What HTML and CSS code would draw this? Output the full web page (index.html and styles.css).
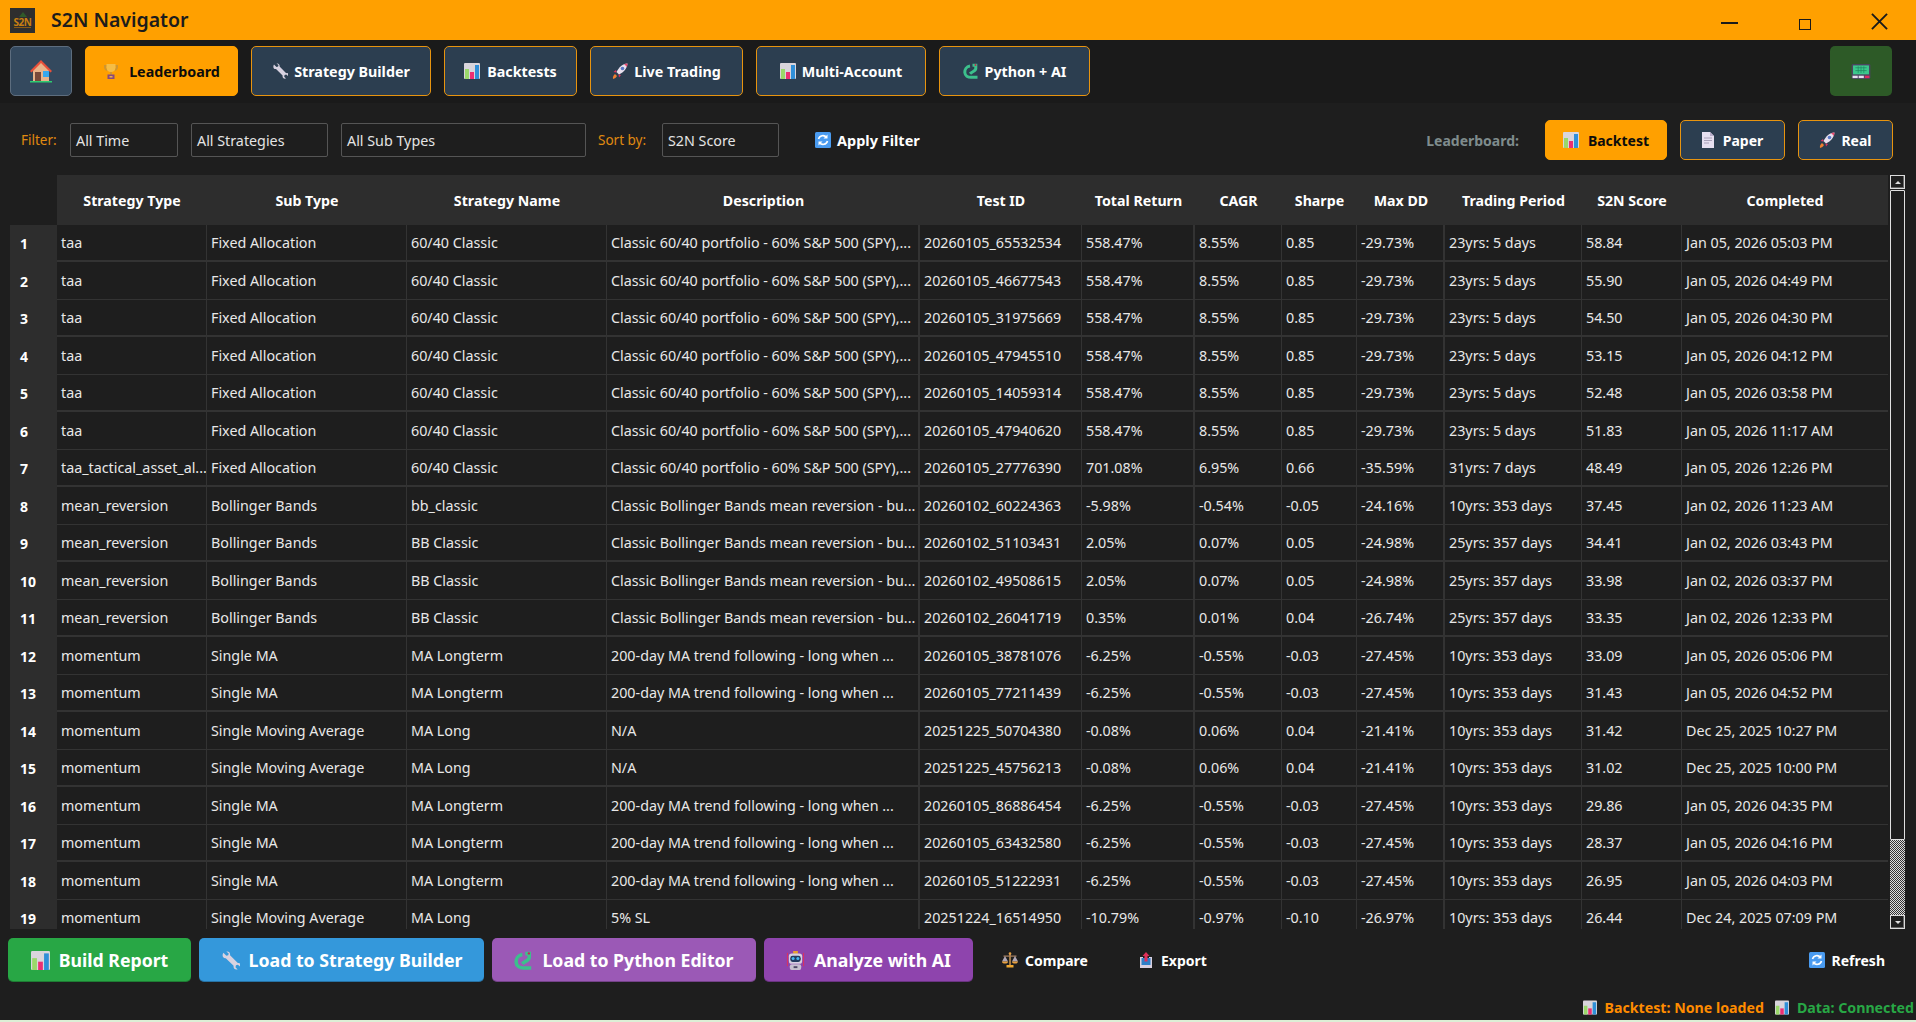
FILE: index.html
```html
<!DOCTYPE html>
<html lang="en">
<head>
<meta charset="utf-8">
<title>S2N Navigator</title>
<link rel="stylesheet" href="styles.css">
</head>
<body>
<svg class="defs" aria-hidden="true">
  <symbol id="chart" viewBox="0 0 16 16"><rect x="0" y="0" width="16" height="16" rx="1" fill="#d9d5dc"/><rect x="1" y="6" width="4" height="10" fill="#9ad86a"/><rect x="6" y="9" width="4" height="7" fill="#ec2f73"/><rect x="11" y="2" width="4" height="14" fill="#2f8fd8"/></symbol>
  <symbol id="wrench" viewBox="0 0 16 16"><path d="M2 1.5 4.5 4l1.6-.5L6.5 2 4.500.5C6.500 0 8 1.500 7.600 3.600l6.600 6.600c2-.5 2.600 1 2 3l-2-1.600-1.600.5-.4 1.600 1.800 1.800c-2.200.6-3.800-.8-3.400-3L4 6C1.800 6.500.500 4 2 1.500z" fill="#d8d2e0"/></symbol>
  <symbol id="trophy" viewBox="0 0 16 16"><path d="M1 2h14v2c0 2.500-2 4-3.500 4L13 3.500H3L4.500 8C3 8 1 6.500 1 4z" fill="#d0952e"/><path d="M3.500 1h9v3.500c0 3-2.200 4.500-4.500 4.500S3.500 7.500 3.500 4.500z" fill="#f5bd45"/><rect x="7" y="9" width="2" height="3" fill="#d0952e"/><rect x="4.500" y="11.500" width="7" height="4.500" fill="#8a4a7a"/><rect x="6.500" y="13" width="3" height="1.500" fill="#e8b050"/></symbol>
  <symbol id="house" viewBox="0 0 24 24"><path d="M4 11 12 3l8 8v11H4z" fill="#e8b48a"/><path d="M1 12 12 1l11 11-1.500 1.500L12 4 2.500 13.500z" fill="#e8503a"/><rect x="6" y="13" width="6" height="9" fill="#7a4a3a"/><rect x="14" y="12" width="6" height="6" fill="#35a8ee"/><rect x="1" y="22" width="22" height="1.500" fill="#2ecc71"/></symbol>
  <symbol id="rocket" viewBox="0 0 16 16"><path d="M1 16c-.5-2 .5-4 2-5l2 2c-1 1.500-2 2.500-4 3z" fill="#f08030"/><path d="M4 7 1.500 9l3 .5zM9 12l-2 2.500L6.500 11.500z" fill="#e03060"/><path d="M15.500.5C10.500 1 7 4 4.500 9L7 11.500c5-2.500 8-6 8.500-11z" fill="#e8e0ee"/><path d="M15.500.5 12 1l3 3z" fill="#e84a70"/><circle cx="10.500" cy="5.500" r="1.800" fill="#5a78c8"/></symbol>
  <symbol id="snake" viewBox="0 0 16 16"><path d="M7 3C3.500 3.500 1.600 6.500 1.800 9.500 2 12.800 5 14.300 8 14.300h6.500" fill="none" stroke="#3cc08c" stroke-width="3"/><path d="M9.500 2.200h3.300v3.300c0 2.700-3.800 3-5.800 5.200" fill="none" stroke="#3cc08c" stroke-width="3"/><circle cx="12.500" cy="2" r="1" fill="#c03050"/></symbol>
  <symbol id="pager" viewBox="0 0 20 16"><rect x="0" y="0" width="20" height="16" rx="1.500" fill="#4b4560"/><rect x="1.500" y="1.500" width="17" height="9.500" fill="#3cc88c"/><path d="M4 4h12M4 7h12M7 2.500v7M10 2.500v7M13 2.500v7" stroke="#1f8a60" stroke-width=".8"/><rect x="1" y="12.500" width="5.500" height="2.500" fill="#e8e0f0"/><rect x="7.500" y="12.500" width="5.500" height="2.500" fill="#e8e0f0"/><rect x="14" y="12.500" width="5" height="2.500" fill="#e02a60"/></symbol>
  <symbol id="page" viewBox="0 0 12 16"><path d="M0 0h8l4 4v12H0z" fill="#e6dff0"/><path d="M8 0l4 4H8z" fill="#b8aecb"/><path d="M2 6h8M2 8.500h8M2 11h5" stroke="#a8a0b8"/></symbol>
  <symbol id="refresh" viewBox="0 0 16 16"><rect width="16" height="16" rx="1.500" fill="#4a9bf0"/><path d="M3.500 7a4.500 4.500 0 0 1 8-1.500M12.500 9a4.500 4.500 0 0 1-8 1.500" fill="none" stroke="#fff" stroke-width="1.600"/><path d="M12.500 2.500v4h-4zM3.500 13.500v-4h4z" fill="#fff"/></symbol>
  <symbol id="scales" viewBox="0 0 16 16"><rect x="7.200" y="1" width="1.600" height="12" fill="#c09050"/><rect x="1.500" y="3.500" width="13" height="1.200" fill="#a88060"/><path d="M0 9.500h6L3 4zM10 9.500h6L13 4z" fill="#b0a8b8"/><path d="M0 9.500h6a3 2 0 0 1-6 0zM10 9.500h6a3 2 0 0 1-6 0z" fill="#e8a040"/><rect x="4.500" y="13" width="7" height="2.500" fill="#f0a830"/><circle cx="8" cy="1.500" r="1.300" fill="#e8a040"/></symbol>
  <symbol id="outbox" viewBox="0 0 14 16"><path d="M1 5h3v5h6V5h3v11H1z" fill="#d8d0e0"/><rect x="2.500" y="6" width="9" height="7" fill="#2f7fc8"/><path d="M7 0l3.500 4H8.500v5.500h-3V4H3.500z" fill="#e0305a"/></symbol>
  <symbol id="robot" viewBox="0 0 18 20"><rect x="0" y="2" width="1" height="14" fill="#e0305a"/><rect x="17" y="2" width="1" height="14" fill="#e0305a"/><rect x="6.500" y="0" width="5" height="3" fill="#e8a030"/><rect x="2" y="2.500" width="14" height="11" rx="3" fill="#d8d0e0"/><rect x="3.500" y="5" width="11" height="6.500" rx="2.500" fill="#243a60"/><circle cx="6.500" cy="8" r="1.600" fill="#45b8f0"/><circle cx="11.500" cy="8" r="1.600" fill="#45b8f0"/><rect x="3" y="14" width="12" height="6" rx="2" fill="#c8c0d0"/><rect x="7" y="16" width="4" height="2" fill="#504868"/></symbol>
</svg>

<header class="titlebar">
  <div class="app-logo"><span class="logo-tree"></span><span class="logo-text">S2N</span></div>
  <h1 class="app-title">S2N Navigator</h1>
  <div class="window-controls">
    <span class="wc-min"></span>
    <span class="wc-max"></span>
    <svg class="wc-close" viewBox="0 0 18 18"><path d="M1 1 17 17M17 1 1 17" stroke="#1a1a1a" stroke-width="2"/></svg>
  </div>
</header>

<nav class="navbar">
  <button class="nav-btn home-btn"><svg class="ic-home"><use href="#house"/></svg></button>
  <button class="nav-btn active w-leader"><svg class="ic"><use href="#trophy"/></svg>Leaderboard</button>
  <button class="nav-btn w-builder"><svg class="ic"><use href="#wrench"/></svg>Strategy Builder</button>
  <button class="nav-btn w-back"><svg class="ic"><use href="#chart"/></svg>Backtests</button>
  <button class="nav-btn w-live"><svg class="ic"><use href="#rocket"/></svg>Live Trading</button>
  <button class="nav-btn w-multi"><svg class="ic"><use href="#chart"/></svg>Multi-Account</button>
  <button class="nav-btn w-python"><svg class="ic"><use href="#snake"/></svg>Python + AI</button>
  <button class="calc-btn"><svg class="ic-pager"><use href="#pager"/></svg></button>
</nav>

<main class="content">
  <section class="filters">
    <span class="lbl lbl-filter">Filter:</span>
    <div class="combo w-time">All Time</div>
    <div class="combo w-strat">All Strategies</div>
    <div class="combo w-sub">All Sub Types</div>
    <span class="lbl lbl-sort">Sort by:</span>
    <div class="combo w-sort">S2N Score</div>
    <button class="flat-btn apply"><svg class="ic"><use href="#refresh"/></svg>Apply Filter</button>
    <span class="lb-label">Leaderboard:</span>
    <button class="nav-btn active lb-btn w-lb1"><svg class="ic"><use href="#chart"/></svg>Backtest</button>
    <button class="nav-btn lb-btn w-lb2"><svg class="ic-page"><use href="#page"/></svg>Paper</button>
    <button class="nav-btn lb-btn w-lb3"><svg class="ic"><use href="#rocket"/></svg>Real</button>
  </section>

  <section class="table-wrap">
    <div class="table-clip">
      <table class="grid">
        <colgroup>
          <col class="c0"><col class="c1"><col class="c2"><col class="c3"><col class="c4"><col class="c5"><col class="c6"><col class="c7"><col class="c8"><col class="c9"><col class="c10"><col class="c11"><col class="c12">
        </colgroup>
        <thead>
          <tr><th class="corner"></th><th>Strategy Type</th><th>Sub Type</th><th>Strategy Name</th><th>Description</th><th>Test ID</th><th>Total Return</th><th>CAGR</th><th>Sharpe</th><th>Max DD</th><th>Trading Period</th><th>S2N Score</th><th>Completed</th></tr>
        </thead>
        <tbody>
          <tr><th>1</th><td>taa</td><td>Fixed Allocation</td><td>60/40 Classic</td><td>Classic 60/40 portfolio - 60% S&amp;P 500 (SPY),...</td><td>20260105_65532534</td><td>558.47%</td><td>8.55%</td><td>0.85</td><td>-29.73%</td><td>23yrs: 5 days</td><td>58.84</td><td>Jan 05, 2026 05:03 PM</td></tr>
          <tr><th>2</th><td>taa</td><td>Fixed Allocation</td><td>60/40 Classic</td><td>Classic 60/40 portfolio - 60% S&amp;P 500 (SPY),...</td><td>20260105_46677543</td><td>558.47%</td><td>8.55%</td><td>0.85</td><td>-29.73%</td><td>23yrs: 5 days</td><td>55.90</td><td>Jan 05, 2026 04:49 PM</td></tr>
          <tr><th>3</th><td>taa</td><td>Fixed Allocation</td><td>60/40 Classic</td><td>Classic 60/40 portfolio - 60% S&amp;P 500 (SPY),...</td><td>20260105_31975669</td><td>558.47%</td><td>8.55%</td><td>0.85</td><td>-29.73%</td><td>23yrs: 5 days</td><td>54.50</td><td>Jan 05, 2026 04:30 PM</td></tr>
          <tr><th>4</th><td>taa</td><td>Fixed Allocation</td><td>60/40 Classic</td><td>Classic 60/40 portfolio - 60% S&amp;P 500 (SPY),...</td><td>20260105_47945510</td><td>558.47%</td><td>8.55%</td><td>0.85</td><td>-29.73%</td><td>23yrs: 5 days</td><td>53.15</td><td>Jan 05, 2026 04:12 PM</td></tr>
          <tr><th>5</th><td>taa</td><td>Fixed Allocation</td><td>60/40 Classic</td><td>Classic 60/40 portfolio - 60% S&amp;P 500 (SPY),...</td><td>20260105_14059314</td><td>558.47%</td><td>8.55%</td><td>0.85</td><td>-29.73%</td><td>23yrs: 5 days</td><td>52.48</td><td>Jan 05, 2026 03:58 PM</td></tr>
          <tr><th>6</th><td>taa</td><td>Fixed Allocation</td><td>60/40 Classic</td><td>Classic 60/40 portfolio - 60% S&amp;P 500 (SPY),...</td><td>20260105_47940620</td><td>558.47%</td><td>8.55%</td><td>0.85</td><td>-29.73%</td><td>23yrs: 5 days</td><td>51.83</td><td>Jan 05, 2026 11:17 AM</td></tr>
          <tr><th>7</th><td>taa_tactical_asset_al...</td><td>Fixed Allocation</td><td>60/40 Classic</td><td>Classic 60/40 portfolio - 60% S&amp;P 500 (SPY),...</td><td>20260105_27776390</td><td>701.08%</td><td>6.95%</td><td>0.66</td><td>-35.59%</td><td>31yrs: 7 days</td><td>48.49</td><td>Jan 05, 2026 12:26 PM</td></tr>
          <tr><th>8</th><td>mean_reversion</td><td>Bollinger Bands</td><td>bb_classic</td><td>Classic Bollinger Bands mean reversion - bu...</td><td>20260102_60224363</td><td>-5.98%</td><td>-0.54%</td><td>-0.05</td><td>-24.16%</td><td>10yrs: 353 days</td><td>37.45</td><td>Jan 02, 2026 11:23 AM</td></tr>
          <tr><th>9</th><td>mean_reversion</td><td>Bollinger Bands</td><td>BB Classic</td><td>Classic Bollinger Bands mean reversion - bu...</td><td>20260102_51103431</td><td>2.05%</td><td>0.07%</td><td>0.05</td><td>-24.98%</td><td>25yrs: 357 days</td><td>34.41</td><td>Jan 02, 2026 03:43 PM</td></tr>
          <tr><th>10</th><td>mean_reversion</td><td>Bollinger Bands</td><td>BB Classic</td><td>Classic Bollinger Bands mean reversion - bu...</td><td>20260102_49508615</td><td>2.05%</td><td>0.07%</td><td>0.05</td><td>-24.98%</td><td>25yrs: 357 days</td><td>33.98</td><td>Jan 02, 2026 03:37 PM</td></tr>
          <tr><th>11</th><td>mean_reversion</td><td>Bollinger Bands</td><td>BB Classic</td><td>Classic Bollinger Bands mean reversion - bu...</td><td>20260102_26041719</td><td>0.35%</td><td>0.01%</td><td>0.04</td><td>-26.74%</td><td>25yrs: 357 days</td><td>33.35</td><td>Jan 02, 2026 12:33 PM</td></tr>
          <tr><th>12</th><td>momentum</td><td>Single MA</td><td>MA Longterm</td><td>200-day MA trend following - long when ...</td><td>20260105_38781076</td><td>-6.25%</td><td>-0.55%</td><td>-0.03</td><td>-27.45%</td><td>10yrs: 353 days</td><td>33.09</td><td>Jan 05, 2026 05:06 PM</td></tr>
          <tr><th>13</th><td>momentum</td><td>Single MA</td><td>MA Longterm</td><td>200-day MA trend following - long when ...</td><td>20260105_77211439</td><td>-6.25%</td><td>-0.55%</td><td>-0.03</td><td>-27.45%</td><td>10yrs: 353 days</td><td>31.43</td><td>Jan 05, 2026 04:52 PM</td></tr>
          <tr><th>14</th><td>momentum</td><td>Single Moving Average</td><td>MA Long</td><td>N/A</td><td>20251225_50704380</td><td>-0.08%</td><td>0.06%</td><td>0.04</td><td>-21.41%</td><td>10yrs: 353 days</td><td>31.42</td><td>Dec 25, 2025 10:27 PM</td></tr>
          <tr><th>15</th><td>momentum</td><td>Single Moving Average</td><td>MA Long</td><td>N/A</td><td>20251225_45756213</td><td>-0.08%</td><td>0.06%</td><td>0.04</td><td>-21.41%</td><td>10yrs: 353 days</td><td>31.02</td><td>Dec 25, 2025 10:00 PM</td></tr>
          <tr><th>16</th><td>momentum</td><td>Single MA</td><td>MA Longterm</td><td>200-day MA trend following - long when ...</td><td>20260105_86886454</td><td>-6.25%</td><td>-0.55%</td><td>-0.03</td><td>-27.45%</td><td>10yrs: 353 days</td><td>29.86</td><td>Jan 05, 2026 04:35 PM</td></tr>
          <tr><th>17</th><td>momentum</td><td>Single MA</td><td>MA Longterm</td><td>200-day MA trend following - long when ...</td><td>20260105_63432580</td><td>-6.25%</td><td>-0.55%</td><td>-0.03</td><td>-27.45%</td><td>10yrs: 353 days</td><td>28.37</td><td>Jan 05, 2026 04:16 PM</td></tr>
          <tr><th>18</th><td>momentum</td><td>Single MA</td><td>MA Longterm</td><td>200-day MA trend following - long when ...</td><td>20260105_51222931</td><td>-6.25%</td><td>-0.55%</td><td>-0.03</td><td>-27.45%</td><td>10yrs: 353 days</td><td>26.95</td><td>Jan 05, 2026 04:03 PM</td></tr>
          <tr><th>19</th><td>momentum</td><td>Single Moving Average</td><td>MA Long</td><td>5% SL</td><td>20251224_16514950</td><td>-10.79%</td><td>-0.97%</td><td>-0.10</td><td>-26.97%</td><td>10yrs: 353 days</td><td>26.44</td><td>Dec 24, 2025 07:09 PM</td></tr>
        </tbody>
      </table>
    </div>
    <div class="scrollbar">
      <div class="sb-arrow"><span class="tri-up"></span></div>
      <div class="sb-thumb"></div>
      <div class="sb-track"></div>
      <div class="sb-arrow"><span class="tri-down"></span></div>
    </div>
  </section>

  <section class="actions">
    <button class="act act-build"><svg class="ic-act"><use href="#chart"/></svg>Build Report</button>
    <button class="act act-load"><svg class="ic-act"><use href="#wrench"/></svg>Load to Strategy Builder</button>
    <button class="act act-py"><svg class="ic-act"><use href="#snake"/></svg>Load to Python Editor</button>
    <button class="act act-ai"><svg class="ic-act"><use href="#robot"/></svg>Analyze with AI</button>
    <button class="flat-btn compare"><svg class="ic"><use href="#scales"/></svg>Compare</button>
    <button class="flat-btn export"><svg class="ic"><use href="#outbox"/></svg>Export</button>
    <button class="flat-btn refresh"><svg class="ic"><use href="#refresh"/></svg>Refresh</button>
  </section>

  <footer class="status">
    <svg class="ic-st"><use href="#chart"/></svg><span class="st-warn">Backtest: None loaded</span>
    <svg class="ic-st st-gap"><use href="#chart"/></svg><span class="st-ok">Data: Connected</span>
  </footer>
</main>
<div class="edge"></div>
</body>
</html>
```
FILE: styles.css
```css
* { box-sizing: border-box; }
html, body { margin: 0; height: 100%; overflow: hidden; }
body { width: 1916px; height: 1022px; display: flex; flex-direction: column; background: #1e1e1e; color: #e8e8e8; font-family: "Noto Sans", "Open Sans", sans-serif; font-size: 13px; }
button { font-family: inherit; cursor: default; }
.defs { position: absolute; width: 0; height: 0; }
.ic { width: 16px; height: 16px; flex: none; }
.ic-st { width: 14px; height: 15px; flex: none; }

.titlebar { height: 40px; flex: none; background: #ffa000; display: flex; align-items: center; padding: 0 0 0 10px; }
.app-logo { width: 25px; height: 25px; background: #2e2e2e; display: flex; flex-direction: column; align-items: center; justify-content: center; }
.logo-tree { width: 0; height: 0; border: 4px solid transparent; border-top: 0; border-bottom: 5px solid #2f5a2a; }
.logo-text { font-size: 10px; line-height: 10px; font-weight: 700; color: #c77f12; letter-spacing: -.5px; }
.logo-text::after { content: ""; display: block; height: 1px; background: #8a5a12; }
.app-title { margin: 0 0 0 16px; font-size: 19.500px; font-weight: 600; color: #1c1c1c; line-height: 1; }
.window-controls { margin-left: auto; display: flex; align-items: center; }
.wc-min { width: 17px; height: 2px; background: #1a1a1a; margin: 6px 61px 0 0; }
.wc-max { width: 12px; height: 11px; border: 1px solid #1a1a1a; margin: 9px 60px 0 0; }
.wc-close { width: 17px; height: 17px; margin: 2px 28px 0 0; }

.navbar { height: 63px; flex: none; background: #1a1a1a; display: flex; align-items: flex-start; gap: 13px; padding: 6px 24px 0 10px; }
.nav-btn { height: 50px; background: #2c3e50; border: 1px solid #e8940f; border-radius: 5px; color: #fff; font-weight: 700; font-size: 14.300px; display: flex; align-items: center; justify-content: center; gap: 6px; padding: 0; white-space: nowrap; }
.nav-btn.active { background: #ffa000; border-color: #ffa000; color: #0c0c0c; }
.home-btn { width: 62px; background: #34495e; border-color: #5d6d7e; }
.ic-home { width: 24px; height: 24px; }
.w-leader { width: 153px; gap: 10px; }
.w-builder { width: 180px; }
.w-back { width: 133px; gap: 7px; }
.w-live { width: 153px; }
.w-multi { width: 170px; }
.w-python { width: 151px; }
.calc-btn { width: 62px; height: 50px; margin-left: auto; background: #2d5a27; border: 0; border-radius: 5px; display: flex; align-items: center; justify-content: center; padding: 0; }
.ic-pager { width: 20px; height: 15px; }

.content { flex: 1; min-height: 0; display: flex; flex-direction: column; background: #1e1e1e; }
.filters { height: 72px; flex: none; display: flex; align-items: center; padding: 2px 23px 0 21px; font-size: 14.300px; }
.lbl { color: #e08a10; font-size: 13.500px; }
.lbl-filter { width: 49px; }
.lbl-sort { width: 64px; margin-left: 12px; }
.combo { height: 34px; border: 1px solid #555; border-radius: 2px; padding-left: 5px; display: flex; align-items: center; color: #e4e4e4; }
.w-time { width: 108px; margin-right: 13px; }
.w-strat { width: 137px; margin-right: 13px; }
.w-sub { width: 245px; }
.w-sort { width: 117px; }
.flat-btn { background: none; border: 0; color: #fff; font-weight: 700; font-size: 14px; display: flex; align-items: center; gap: 7px; padding: 0; white-space: nowrap; }
.apply { margin-left: 36px; gap: 6px; font-size: 14.500px; }
.lb-label { margin-left: auto; margin-right: 26px; color: #7f8c8d; font-weight: 700; font-size: 14px; }
.lb-btn { height: 40px; margin-left: 13px; font-size: 14px; }
.w-lb1 { width: 122px; margin-left: 0; gap: 9px; }
.w-lb2 { width: 105px; gap: 9px; }
.w-lb3 { width: 95px; }
.ic-page { width: 12px; height: 18px; }

.table-wrap { height: 754px; flex: none; display: flex; padding-left: 10px; }
.table-clip { width: 1878px; height: 754px; overflow: hidden; }
.grid { width: 1878px; table-layout: fixed; border-collapse: separate; border-spacing: 0; }
.c0 { width: 47px; } .c1 { width: 150px; } .c2 { width: 200px; } .c3 { width: 200px; } .c4 { width: 313px; } .c5 { width: 162px; } .c6 { width: 113px; } .c7 { width: 87px; } .c8 { width: 75px; } .c9 { width: 88px; } .c10 { width: 137px; } .c11 { width: 100px; } .c12 { width: 206px; }
thead th { height: 50px; padding: 0; background: #2d2d2d; color: #fff; font-weight: 700; font-size: 14.200px; text-align: center; }
thead th.corner { background: #1e1e1e; }
tbody tr:nth-child(odd) { height: 37px; }
tbody tr:nth-child(even) { height: 38px; }
tbody th { background: #2d2d2d; color: #fff; font-weight: 700; font-size: 14px; text-align: left; padding: 0 0 0 10px; }
tbody td { padding: 1px 3px 0 4px; font-size: 14.300px; line-height: 20px; color: #e8e8e8; white-space: nowrap; overflow: hidden; border-right: 1px solid #333; border-bottom: 1px solid #333; }
tbody tr:nth-child(odd) td { border-bottom-width: 2px; }
tbody td:nth-child(5), tbody td:nth-child(7), tbody td:nth-child(10) { border-right-width: 2px; }
tbody td:last-child { border-right: 0; }

.scrollbar { width: 15px; margin-left: 2px; height: 754px; display: flex; flex-direction: column; background: #1e1e1e; }
.sb-arrow { height: 14px; flex: none; border: 1px solid #dcdcdc; background: #1e1e1e; display: flex; align-items: center; justify-content: center; box-shadow: inset -1px -1px 0 #666; }
.tri-up { border: 3px solid transparent; border-top: 0; border-bottom: 3px solid #ddd; }
.tri-down { border: 3px solid transparent; border-bottom: 0; border-top: 3px solid #ddd; }
.sb-thumb { height: 650px; flex: none; margin-top: 1px; border: 1px solid #e0e0e0; border-radius: 1px; background: #1e1e1e; }
.sb-track { flex: 1; background: repeating-conic-gradient(#ddd 0 25%, #333 0 50%) 0 0 / 2px 2px; }

.actions { height: 44px; flex: none; margin-top: 9px; display: flex; align-items: center; padding: 0 31px 0 8px; }
.act { height: 44px; border: 0; border-radius: 5px; color: #fff; font-size: 17.700px; font-weight: 700; display: flex; align-items: center; justify-content: center; gap: 9px; padding: 0; margin-right: 8px; white-space: nowrap; box-shadow: inset 0 -1px 0 rgba(0,0,0,.25); }
.ic-act { width: 19px; height: 19px; flex: none; }
.act-build { width: 183px; background: #28a745; }
.act-load { width: 285px; background: #3498db; }
.act-py { width: 264px; background: #9b59b6; }
.act-ai { width: 209px; background: #8e44ad; }
.compare { margin-left: 21px; }
.export { margin-left: 50px; }
.refresh { margin-left: auto; }

.status { height: 38px; flex: none; display: flex; align-items: center; justify-content: flex-end; gap: 8px; padding: 13px 2px 0 0; font-size: 14.200px; font-weight: 700; }
.st-warn { color: #ff8c00; }
.st-ok { color: #28a745; }
.st-gap { margin-left: 3px; }
.edge { height: 2px; flex: none; background: #dcefd6; }
```
